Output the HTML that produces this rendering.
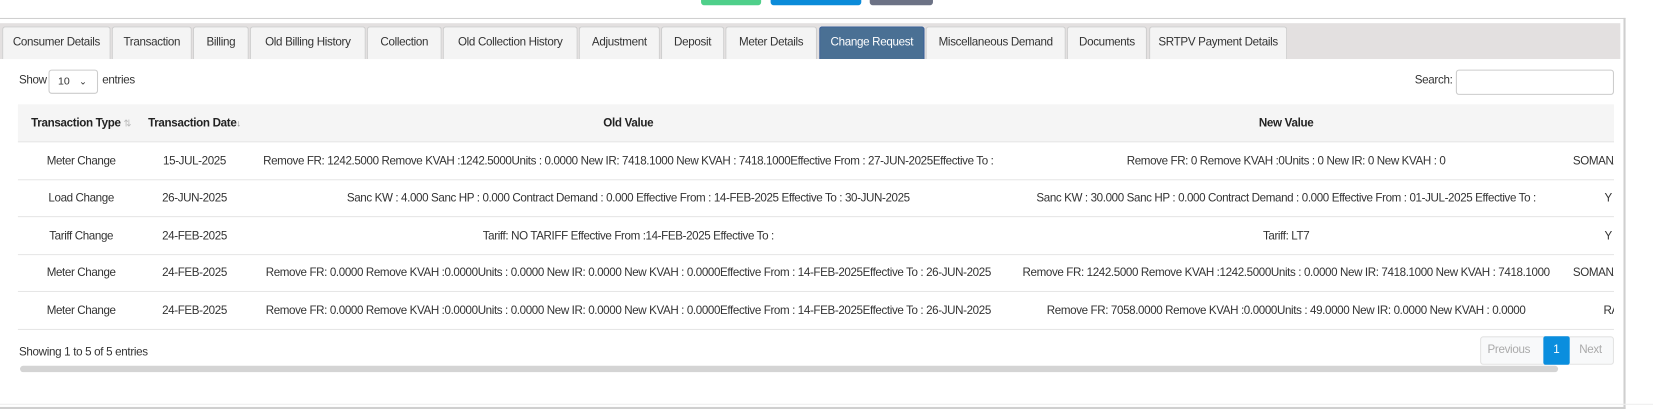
<!DOCTYPE html>
<html><head><meta charset="utf-8"><style>
*{box-sizing:border-box;margin:0;padding:0}
body{width:1653px;height:405px;background:#fff;font-family:"Liberation Sans",sans-serif;font-size:11px;color:#333;position:relative;overflow:hidden}
#w{position:absolute;left:0;top:0;width:1568px;height:385px;transform:scale(1.0542);transform-origin:0 0}
.abs{position:absolute}
.card{left:0;top:17px;width:1542px;height:371px;border:1px solid #cfcfcf;border-left:none;border-right:2px solid #cfcfcf;border-bottom:2px solid #cfcfcf}
.tabbar{left:0;top:22px;width:1537px;height:34px;background:#e3e0e0}
.tab{position:absolute;top:25px;height:31px;background:#f4f4f4;border:1px solid #cfcfcf;border-bottom:none;border-radius:3px 3px 0 0;text-align:center;line-height:29px;color:#333;white-space:nowrap;font-size:11px;letter-spacing:-0.3px}
.tab.act{background:#4a7094;color:#fff;border-color:#3a5f9a}
.hdr{left:17px;top:99px;width:1514px;height:36px;background:#f5f5f5}
.c{position:absolute;text-align:center;white-space:nowrap;overflow:hidden;letter-spacing:-0.36px}
.row{position:absolute;left:17px;width:1514px;height:1px;background:#e6e6e6}
.th{font-weight:bold;color:#222;letter-spacing:-0.3px}
</style></head><body><div id="w">
<div class="abs" style="left:665px;top:0;width:57px;height:5px;background:#4fcf8a;border-radius:0 0 3px 3px"></div>
<div class="abs" style="left:731px;top:0;width:86px;height:5px;background:#0b8bd9;border-radius:0 0 3px 3px"></div>
<div class="abs" style="left:825px;top:0;width:60px;height:5px;background:#6c7285;border-radius:0 0 3px 3px"></div>
<div class="abs card"></div>
<div class="abs tabbar"></div>
<div class="tab" style="left:2px;width:103px">Consumer Details</div>
<div class="tab" style="left:106px;width:76px">Transaction</div>
<div class="tab" style="left:183px;width:53px">Billing</div>
<div class="tab" style="left:237px;width:110px">Old Billing History</div>
<div class="tab" style="left:348px;width:71px">Collection</div>
<div class="tab" style="left:420px;width:128px">Old Collection History</div>
<div class="tab" style="left:549px;width:77px">Adjustment</div>
<div class="tab" style="left:627px;width:60px">Deposit</div>
<div class="tab" style="left:688px;width:87px">Meter Details</div>
<div class="tab act" style="left:777px;width:100px">Change Request</div>
<div class="tab" style="left:878px;width:133px">Miscellaneous Demand</div>
<div class="tab" style="left:1012px;width:76px">Documents</div>
<div class="tab" style="left:1090px;width:131px">SRTPV Payment Details</div>

<div class="abs" style="left:18px;top:70px;letter-spacing:-0.3px">Show</div>
<div class="abs" style="left:46px;top:66px;width:47px;height:23px;border:1px solid #ccc;border-radius:3px;padding:5px 0 0 8px;font-size:10px">10 <span style="font-size:9px;margin-left:6px">&#8964;</span></div>
<div class="abs" style="left:97px;top:70px;letter-spacing:-0.3px">entries</div>
<div class="abs" style="left:1342px;top:70px;letter-spacing:-0.3px">Search:</div>
<div class="abs" style="left:1381px;top:66px;width:150px;height:24px;border:1px solid #ccc;border-radius:3px"></div>

<div class="abs hdr"></div>
<div class="c th" style="left:17px;width:120px;top:111px">Transaction Type <span style="color:#bbb;font-weight:normal;font-size:9px">&#8645;</span></div>
<div class="c th" style="left:137px;width:95px;top:111px">Transaction Date<span style="color:#888;font-weight:normal;font-size:9px">&#8595;</span></div>
<div class="c th" style="left:232px;width:728px;top:111px">Old Value</div>
<div class="c th" style="left:960px;width:520px;top:111px">New Value</div>

<div class="row" style="top:134px"></div>
<div class="row" style="top:170px"></div>
<div class="row" style="top:205px"></div>
<div class="row" style="top:241px"></div>
<div class="row" style="top:276px"></div>
<div class="row" style="top:312px"></div>

<div class="c" style="left:17px;width:120px;top:147px">Meter Change</div>
<div class="c" style="left:137px;width:95px;top:147px">15-JUL-2025</div>
<div class="c" style="left:232px;width:728px;top:147px">Remove FR: 1242.5000 Remove KVAH :1242.5000Units : 0.0000 New IR: 7418.1000 New KVAH : 7418.1000Effective From : 27-JUN-2025Effective To :</div>
<div class="c" style="left:960px;width:520px;top:147px">Remove FR: 0 Remove KVAH :0Units : 0 New IR: 0 New KVAH : 0</div>
<div class="c" style="left:1492px;width:39px;top:147px;text-align:left">SOMANA</div>

<div class="c" style="left:17px;width:120px;top:182px">Load Change</div>
<div class="c" style="left:137px;width:95px;top:182px">26-JUN-2025</div>
<div class="c" style="left:232px;width:728px;top:182px">Sanc KW : 4.000 Sanc HP : 0.000 Contract Demand : 0.000 Effective From : 14-FEB-2025 Effective To : 30-JUN-2025</div>
<div class="c" style="left:960px;width:520px;top:182px">Sanc KW : 30.000 Sanc HP : 0.000 Contract Demand : 0.000 Effective From : 01-JUL-2025 Effective To :</div>
<div class="c" style="left:1522px;width:9px;top:182px;text-align:left">Y</div>

<div class="c" style="left:17px;width:120px;top:218px">Tariff Change</div>
<div class="c" style="left:137px;width:95px;top:218px">24-FEB-2025</div>
<div class="c" style="left:232px;width:728px;top:218px">Tariff: NO TARIFF Effective From :14-FEB-2025 Effective To :</div>
<div class="c" style="left:960px;width:520px;top:218px">Tariff: LT7</div>
<div class="c" style="left:1522px;width:9px;top:218px;text-align:left">Y</div>

<div class="c" style="left:17px;width:120px;top:253px">Meter Change</div>
<div class="c" style="left:137px;width:95px;top:253px">24-FEB-2025</div>
<div class="c" style="left:232px;width:728px;top:253px">Remove FR: 0.0000 Remove KVAH :0.0000Units : 0.0000 New IR: 0.0000 New KVAH : 0.0000Effective From : 14-FEB-2025Effective To : 26-JUN-2025</div>
<div class="c" style="left:960px;width:520px;top:253px">Remove FR: 1242.5000 Remove KVAH :1242.5000Units : 0.0000 New IR: 7418.1000 New KVAH : 7418.1000</div>
<div class="c" style="left:1492px;width:39px;top:253px;text-align:left">SOMANA</div>

<div class="c" style="left:17px;width:120px;top:289px">Meter Change</div>
<div class="c" style="left:137px;width:95px;top:289px">24-FEB-2025</div>
<div class="c" style="left:232px;width:728px;top:289px">Remove FR: 0.0000 Remove KVAH :0.0000Units : 0.0000 New IR: 0.0000 New KVAH : 0.0000Effective From : 14-FEB-2025Effective To : 26-JUN-2025</div>
<div class="c" style="left:960px;width:520px;top:289px">Remove FR: 7058.0000 Remove KVAH :0.0000Units : 49.0000 New IR: 0.0000 New KVAH : 0.0000</div>
<div class="c" style="left:1521px;width:10px;top:289px;text-align:left">RA</div>

<div class="abs" style="left:18px;top:328px;letter-spacing:-0.3px">Showing 1 to 5 of 5 entries</div>
<div class="abs" style="left:1404px;top:319px;width:127px;height:27px;border:1px solid #e3e3e3;border-radius:3px;background:#f8f9fa"></div>
<div class="abs" style="left:1411px;top:326px;color:#aaa;letter-spacing:-0.3px">Previous</div>
<div class="abs" style="left:1464px;top:319px;width:25px;height:27px;background:#0a8ede;border-radius:2px;color:#fff;text-align:center;line-height:27px">1</div>
<div class="abs" style="left:1498px;top:326px;color:#aaa;letter-spacing:-0.3px">Next</div>
<div class="abs" style="left:19px;top:347px;width:1459px;height:6px;background:#d4d4d4;border-radius:3px"></div>
<div class="abs" style="left:0;top:383px;width:1568px;height:1px;background:#eee"></div>
</div></body></html>
